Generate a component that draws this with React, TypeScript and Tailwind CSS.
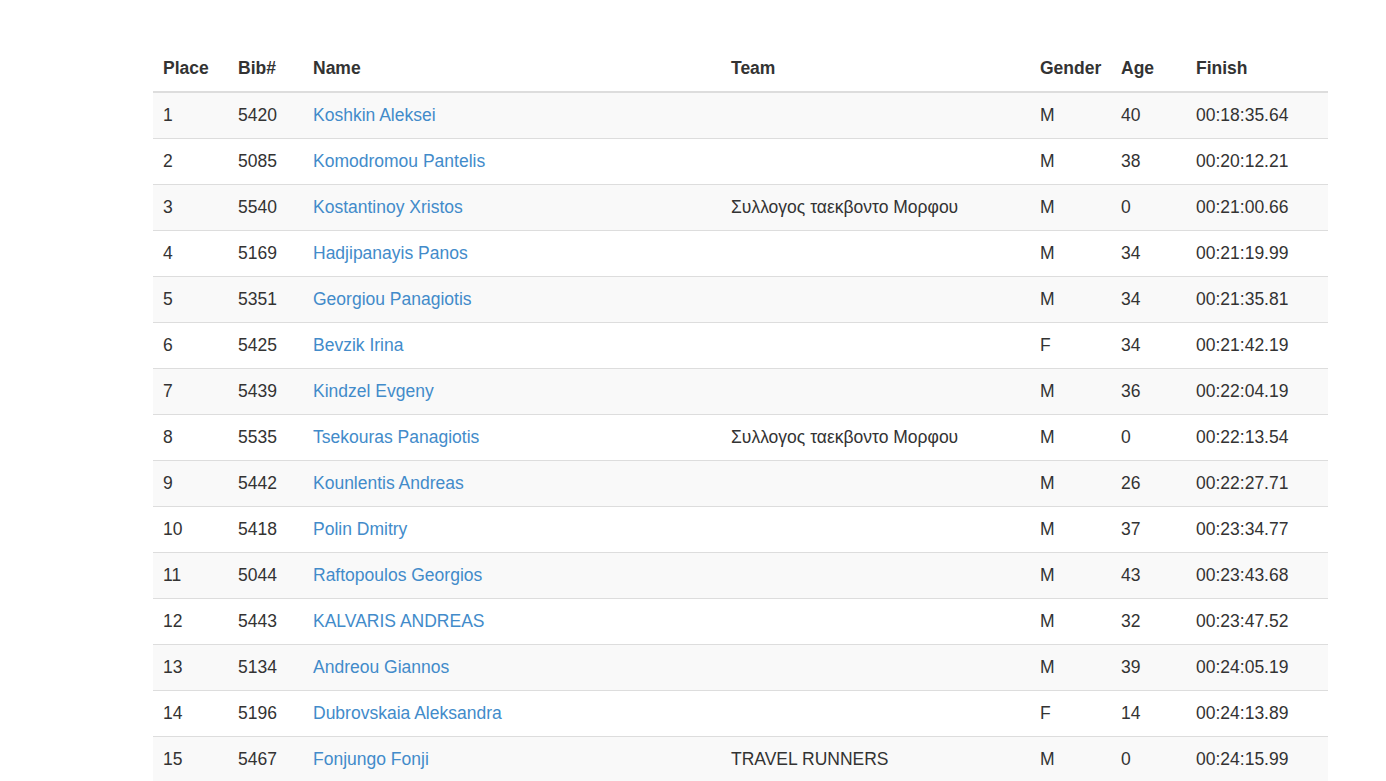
import React from "react";

const rows = [
  ["1", "5420", "Koshkin Aleksei", "", "M", "40", "00:18:35.64"],
  ["2", "5085", "Komodromou Pantelis", "", "M", "38", "00:20:12.21"],
  ["3", "5540", "Kostantinoy Xristos", "Συλλογος ταεκβοντο Μορφου", "M", "0", "00:21:00.66"],
  ["4", "5169", "Hadjipanayis Panos", "", "M", "34", "00:21:19.99"],
  ["5", "5351", "Georgiou Panagiotis", "", "M", "34", "00:21:35.81"],
  ["6", "5425", "Bevzik Irina", "", "F", "34", "00:21:42.19"],
  ["7", "5439", "Kindzel Evgeny", "", "M", "36", "00:22:04.19"],
  ["8", "5535", "Tsekouras Panagiotis", "Συλλογος ταεκβοντο Μορφου", "M", "0", "00:22:13.54"],
  ["9", "5442", "Kounlentis Andreas", "", "M", "26", "00:22:27.71"],
  ["10", "5418", "Polin Dmitry", "", "M", "37", "00:23:34.77"],
  ["11", "5044", "Raftopoulos Georgios", "", "M", "43", "00:23:43.68"],
  ["12", "5443", "KALVARIS ANDREAS", "", "M", "32", "00:23:47.52"],
  ["13", "5134", "Andreou Giannos", "", "M", "39", "00:24:05.19"],
  ["14", "5196", "Dubrovskaia Aleksandra", "", "F", "14", "00:24:13.89"],
  ["15", "5467", "Fonjungo Fonji", "TRAVEL RUNNERS", "M", "0", "00:24:15.99"],
];

const headers = ["Place", "Bib#", "Name", "Team", "Gender", "Age", "Finish"];
const widths = ["w-[75px]", "w-[75px]", "w-[418px]", "w-[309px]", "w-[81px]", "w-[75px]", "w-[142px]"];

const App = () => {
  return (
    <div className="min-h-screen bg-white pl-[153px] pt-[46px] font-['Liberation_Sans',Arial,sans-serif] text-[17.5px] text-[#333]">
      <table className="w-[1175px] table-fixed border-collapse">
        <thead>
          <tr>
            {headers.map((h, i) => (
              <th
                key={h}
                className={`${widths[i]} border-b-2 border-[#ddd] px-[10px] py-2 text-left font-bold leading-[29px]`}
              >
                {h}
              </th>
            ))}
          </tr>
        </thead>
        <tbody>
          {rows.map((r, idx) => (
            <tr key={r[0]} className={idx % 2 === 0 ? "bg-[#f9f9f9]" : "bg-white"}>
              {r.map((c, i) => (
                <td key={i} className="border-t border-[#ddd] px-[10px] py-2 leading-[29px] whitespace-nowrap">
                  {i === 2 ? <a href="#" className="text-[#428bca]">{c}</a> : c}
                </td>
              ))}
            </tr>
          ))}
        </tbody>
      </table>
    </div>
  );
};

export default App;
